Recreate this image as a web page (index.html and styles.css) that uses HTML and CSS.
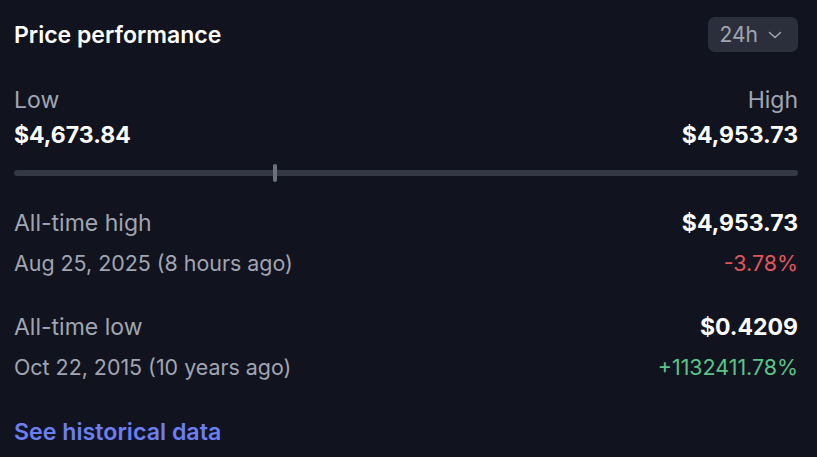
FILE: index.html
```html
<!DOCTYPE html>
<html>
<head>
  <title>Price performance</title>
  <link rel="stylesheet" href="styles.css">
</head>
<body>
  <div class="panel">
    <div class="header">
      <h2 class="title">Price performance</h2>
      <button class="range">
        <span>24h</span>
        <svg viewBox="0 0 14 8"><path d="M1.5 1.5 7 6.5l5.5-5"/></svg>
      </button>
    </div>

    <div class="range-labels">
      <div>
        <div class="label">Low</div>
        <div class="value">$4,673.84</div>
      </div>
      <div class="right">
        <div class="label">High</div>
        <div class="value">$4,953.73</div>
      </div>
    </div>

    <div class="track">
      <div class="marker" style="left: 33.3%"></div>
    </div>

    <div class="stat">
      <div class="row">
        <span class="label">All-time high</span>
        <span class="value">$4,953.73</span>
      </div>
      <div class="row">
        <span class="date">Aug 25, 2025 (8 hours ago)</span>
        <span class="change down">-3.78%</span>
      </div>
    </div>

    <div class="stat">
      <div class="row">
        <span class="label">All-time low</span>
        <span class="value">$0.4209</span>
      </div>
      <div class="row">
        <span class="date">Oct 22, 2015 (10 years ago)</span>
        <span class="change up">+1132411.78%</span>
      </div>
    </div>

    <a class="history" href="#">See historical data</a>
  </div>
</body>
</html>
```

FILE: styles.css
```css
:root {
  --bg: #11141f;
  --text: #ffffff;
  --muted: #a1a5b2;
  --track: #353946;
  --red: #e0575a;
  --green: #5cc488;
  --link: #6c7ff2;
}

* {
  margin: 0;
  padding: 0;
  box-sizing: border-box;
}

body {
  width: 817px;
  height: 457px;
  background: var(--bg);
  color: var(--text);
  font-family: Inter, 'Noto Sans', sans-serif;
  overflow: hidden;
}

.panel {
  padding: 17px 19px 0 14px;
  display: flex;
  flex-direction: column;
}

.header {
  display: flex;
  justify-content: space-between;
  align-items: center;
  height: 35px;
}

.title {
  font-size: 23px;
  font-weight: 600;
}

.range {
  display: flex;
  align-items: center;
  gap: 10px;
  height: 35px;
  padding: 0 16px 0 12px;
  background: #2b2f3c;
  border: none;
  border-radius: 7px;
  color: var(--muted);
  font-family: inherit;
  font-size: 21px;
}

.range svg {
  width: 14px;
  height: 8px;
  fill: none;
  stroke: var(--muted);
  stroke-width: 1.5;
  stroke-linecap: round;
  stroke-linejoin: round;
}

.range-labels {
  display: flex;
  justify-content: space-between;
  margin-top: 36px;
}

.right {
  text-align: right;
}

.label {
  font-size: 23px;
  color: var(--muted);
  line-height: 24px;
}

.value {
  font-size: 23px;
  font-weight: 700;
  line-height: 24px;
}

.range-labels .value {
  margin-top: 11px;
}

.track {
  position: relative;
  height: 6px;
  margin-top: 23px;
  background: var(--track);
  border-radius: 3px;
}

.marker {
  position: absolute;
  top: -6px;
  width: 4px;
  height: 18px;
  margin-left: -2px;
  background: #6b707f;
  border-radius: 2px;
}

.stat {
  margin-top: 35px;
  display: flex;
  flex-direction: column;
  gap: 16px;
}

.stat + .stat {
  margin-top: 40px;
}

.row {
  display: flex;
  justify-content: space-between;
  align-items: center;
  line-height: 24px;
}

.date {
  font-size: 21.4px;
  color: var(--muted);
}

.change {
  font-size: 21.4px;
}

.down {
  color: var(--red);
}

.up {
  color: var(--green);
}

.history {
  margin-top: 41px;
  font-size: 23.2px;
  font-weight: 600;
  color: var(--link);
  text-decoration: none;
  line-height: 24px;
}
```
